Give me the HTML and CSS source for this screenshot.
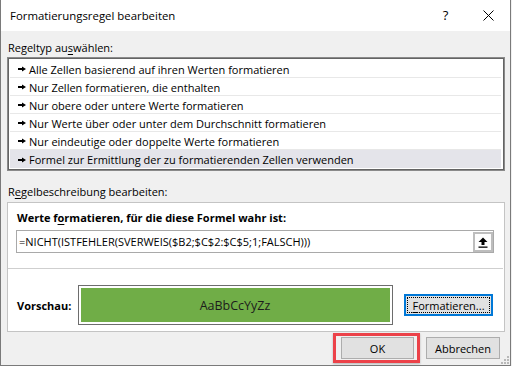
FILE: index.html
```html
<!DOCTYPE html>
<html lang="de">
<head>
<meta charset="utf-8">
<title>Formatierungsregel bearbeiten</title>
<link rel="stylesheet" href="styles.css">
</head>
<body>
<div class="window">
  <div class="titlebar">
    <span class="title">Formatierungsregel bearbeiten</span>
    <span class="help">?</span>
    <span class="close"><svg width="11" height="11" viewBox="0 0 11 11"><path d="M0.5 0.5 L10.5 10.5 M10.5 0.5 L0.5 10.5" stroke="#000" stroke-width="1" fill="none"/></svg></span>
  </div>
  <div class="content">
    <div class="label">Regeltyp au<u>s</u>wählen:</div>
    <div class="listbox">
      <div class="row"><svg class="arrow" width="8" height="6" viewBox="0 0 8 6"><path d="M0 2 H4 V0.5 L8 3 L4 5.5 V4 H0 Z" fill="#000"/></svg>Alle Zellen basierend auf ihren Werten formatieren</div>
      <div class="row"><svg class="arrow" width="8" height="6" viewBox="0 0 8 6"><path d="M0 2 H4 V0.5 L8 3 L4 5.5 V4 H0 Z" fill="#000"/></svg>Nur Zellen formatieren, die enthalten</div>
      <div class="row"><svg class="arrow" width="8" height="6" viewBox="0 0 8 6"><path d="M0 2 H4 V0.5 L8 3 L4 5.5 V4 H0 Z" fill="#000"/></svg>Nur obere oder untere Werte formatieren</div>
      <div class="row"><svg class="arrow" width="8" height="6" viewBox="0 0 8 6"><path d="M0 2 H4 V0.5 L8 3 L4 5.5 V4 H0 Z" fill="#000"/></svg>Nur Werte über oder unter dem Durchschnitt formatieren</div>
      <div class="row"><svg class="arrow" width="8" height="6" viewBox="0 0 8 6"><path d="M0 2 H4 V0.5 L8 3 L4 5.5 V4 H0 Z" fill="#000"/></svg>Nur eindeutige oder doppelte Werte formatieren</div>
      <div class="row selected"><svg class="arrow" width="8" height="6" viewBox="0 0 8 6"><path d="M0 2 H4 V0.5 L8 3 L4 5.5 V4 H0 Z" fill="#000"/></svg>Formel zur Ermittlung der zu formatierenden Zellen verwenden</div>
    </div>
    <div class="label label2">R<u>e</u>gelbeschreibung bearbeiten:</div>
    <div class="panel">
      <div class="panel-top">
        <div class="bold">Werte f<u>o</u>rmatieren, für die diese Formel wahr ist:</div>
        <div class="formula">
          <span class="formula-text">=NICHT(ISTFEHLER(SVERWEIS($B2;$C$2:$C$5;1;FALSCH)))</span>
          <span class="collapse"><svg width="10" height="11" viewBox="0 0 10 11"><path d="M5 0.5 L9.5 5 H6.5 V8 H3.5 V5 H0.5 Z" fill="#000"/><rect x="0.5" y="9.5" width="9" height="1.3" fill="#000"/></svg></span>
        </div>
      </div>
      <div class="panel-bottom">
        <div class="bold preview-label">Vorschau:</div>
        <div class="preview"><div class="sample">AaBbCcYyZz</div></div>
        <div class="btn fmt"><span class="focus"><u>F</u>ormatieren...</span></div>
      </div>
    </div>
    <div class="buttons">
      <div class="okwrap"><div class="btn ok">OK</div><div class="highlight"></div></div>
      <div class="btn cancel">Abbrechen</div>
    </div>
  </div>
  <svg class="grip" width="8" height="8" viewBox="0 0 8 8">
    <rect x="6" y="0" width="2" height="2" fill="#b8b8b8"/>
    <rect x="3" y="3" width="2" height="2" fill="#b8b8b8"/>
    <rect x="6" y="3" width="2" height="2" fill="#b8b8b8"/>
    <rect x="0" y="6" width="2" height="2" fill="#b8b8b8"/>
    <rect x="3" y="6" width="2" height="2" fill="#b8b8b8"/>
    <rect x="6" y="6" width="2" height="2" fill="#b8b8b8"/>
  </svg>
</div>
</body>
</html>
```

FILE: styles.css
```css
* { box-sizing: border-box; }
html, body { margin: 0; padding: 0; }
body {
  width: 512px;
  height: 366px;
  background: #f0f0f0;
  font-family: "Open Sans", "Noto Sans", sans-serif;
  font-size: 11px;
  color: #000;
  overflow: hidden;
}
.window {
  position: relative;
  width: 511px;
  height: 366px;
  border-left: 1px solid #7a7a7a;
  border-right: 1px solid #7a7a7a;
  border-bottom: 1px solid #7a7a7a;
  background: #f0f0f0;
}
.titlebar {
  height: 31px;
  background: #fff;
  display: flex;
  align-items: center;
  padding-left: 9px;
}
.title {
  font-size: 11.4px;
  flex: 1;
  padding-bottom: 1px;
}
.help {
  font-size: 13px;
  width: 44px;
  text-align: center;
  padding-bottom: 2px;
  padding-left: 3px;
}
.close {
  width: 44px;
  display: flex;
  justify-content: center;
  padding-bottom: 1px;
}
.content {
  padding: 9px 4px 0 6px;
}
.label {
  line-height: 16px;
  margin-left: 1px;
  margin-bottom: 1px;
}
.label u, .bold u, .fmt u { text-underline-offset: 2px; }
.label2 {
  margin-top: 13px;
  margin-bottom: 2px;
}
.listbox {
  width: 498px;
  height: 114px;
  background: #fff;
  border: 1px solid #8a8a8a;
  box-shadow: inset 0 0 0 1px #646464;
  padding: 2px 2px 2px 2px;
}
.row {
  height: 18px;
  display: flex;
  align-items: center;
  border-bottom: 1px solid #e8e8e8;
  padding-left: 8px;
  padding-top: 1px;
  margin-right: 1px;
}
.row.selected {
  background: #e4e4ea;
  border-bottom: none;
}
.arrow {
  margin-right: 3px;
  flex: none;
}
.panel {
  width: 498px;
  height: 130px;
  background: #fff;
  border: 1px solid #c4c4c4;
}
.panel-top {
  height: 66px;
  border-bottom: 1px solid #cfcfcf;
  margin-right: 1px;
  padding: 7px 0 0 8px;
}
.bold {
  font-weight: 700;
  line-height: 16px;
  padding-left: 1px;
}
.formula {
  margin-top: 4px;
  width: 478px;
  height: 23px;
  border: 1px solid #a9a9a9;
  display: flex;
  align-items: center;
  justify-content: space-between;
  padding-left: 2px;
}
.formula-text {
  padding-bottom: 1px;
}
.collapse {
  width: 20px;
  height: 20px;
  margin-top: 1px;
  border: 2px solid #bdbdbd;
  background: #fdfdfd;
  display: flex;
  align-items: center;
  justify-content: center;
}
.panel-bottom {
  display: flex;
  align-items: center;
  padding: 16px 0 0 9px;
}
.preview-label {
  width: 61px;
  padding-left: 0;
  margin-top: 1px;
}
.preview {
  width: 315px;
  height: 40px;
  border: 1px solid #6d6d6d;
  padding: 2px;
  background: #fff;
}
.sample {
  height: 100%;
  background: #70ad47;
  color: #1c1c1c;
  font-size: 12.5px;
  display: flex;
  align-items: center;
  justify-content: center;
  padding-right: 1px;
}
.btn {
  height: 22px;
  background: #e1e1e1;
  border: 1px solid #adadad;
  display: flex;
  align-items: center;
  justify-content: center;
}
.fmt {
  margin-left: 11px;
  width: 89px;
  border: 2px solid #0078d7;
  padding: 1px;
}
.focus {
  width: 100%;
  height: 100%;
  border: 1px dotted #000;
  display: flex;
  align-items: center;
  justify-content: center;
}
.buttons {
  display: flex;
  justify-content: flex-end;
  gap: 12px;
  padding-right: 6px;
  margin-top: 5px;
}
.okwrap {
  position: relative;
}
.ok { width: 73px; }
.cancel { width: 74px; }
.highlight {
  position: absolute;
  left: -8px;
  right: -6px;
  top: -4px;
  bottom: -4px;
  border: 3px solid #ec4249;
  box-shadow: 0 1px 2px rgba(0,0,0,0.25);
  pointer-events: none;
}
.grip {
  position: absolute;
  right: 1px;
  bottom: 1px;
}
```
